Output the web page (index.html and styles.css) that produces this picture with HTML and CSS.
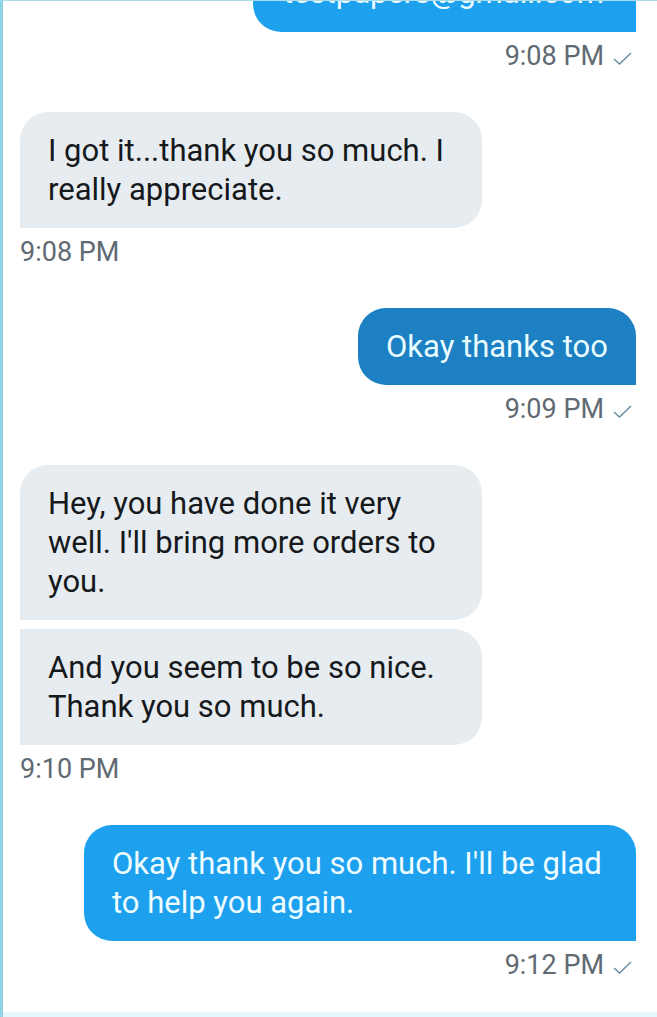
FILE: index.html
```html
<!DOCTYPE html>
<html>
<head>
<meta charset="utf-8">
<link rel="stylesheet" href="styles.css">
</head>
<body>
<div class="screen">
  <div class="chat">
    <div class="group out">
      <div class="bubble blue top-cut">testpapers@gmail.com</div>
      <div class="time">9:08 PM <svg class="check" viewBox="0 0 19 13" width="19" height="13"><path d="M1 7 L6.5 12 L18 1" fill="none" stroke="#6a8da3" stroke-width="1.5"/></svg></div>
    </div>

    <div class="group in">
      <div class="bubble gray first">I got it...thank you so much. I really appreciate.</div>
      <div class="time">9:08 PM</div>
    </div>

    <div class="group out">
      <div class="bubble dark">Okay thanks too</div>
      <div class="time">9:09 PM <svg class="check" viewBox="0 0 19 13" width="19" height="13"><path d="M1 7 L6.5 12 L18 1" fill="none" stroke="#6a8da3" stroke-width="1.5"/></svg></div>
    </div>

    <div class="group in">
      <div class="bubble gray first">Hey, you have done it very well. I'll bring more orders to you.</div>
      <div class="bubble gray mid">And you seem to be so nice. Thank you so much.</div>
      <div class="time">9:10 PM</div>
    </div>

    <div class="group out">
      <div class="bubble blue wide">Okay thank you so much. I'll be glad to help you again.</div>
      <div class="time">9:12 PM <svg class="check" viewBox="0 0 19 13" width="19" height="13"><path d="M1 7 L6.5 12 L18 1" fill="none" stroke="#6a8da3" stroke-width="1.5"/></svg></div>
    </div>
  </div>
  <div class="bottom-band"></div>
</div>
</body>
</html>
```
FILE: styles.css
```css
* { box-sizing: border-box; }
html, body { margin: 0; padding: 0; background: #ffffff; }
body { font-family: Roboto, "Noto Sans", sans-serif; }

.screen {
  width: 657px;
  height: 1017px;
  overflow: hidden;
  border-left: 3px solid #8fd2e4;
  border-top: 1px solid #a9dbe8;
  display: flex;
  flex-direction: column;
}

.chat {
  flex: 1;
  padding: 0 21px 0 17px;
  display: flex;
  flex-direction: column;
  gap: 41px;
}

.group { display: flex; flex-direction: column; }
.group.out { align-items: flex-end; }
.group.in { align-items: flex-start; }

.bubble {
  font-size: 31px;
  line-height: 39px;
  padding: 19px 18px 19px 28px;
  border-radius: 28px;
}

.bubble.gray {
  background: #e6ecf0;
  color: #16191c;
  width: 462px;
}
.group.in .bubble.first { border-radius: 28px 28px 28px 0; }
.group.in .bubble.mid { border-radius: 0 28px 28px 0; margin-top: 9px; }

.bubble.blue {
  background: #1da1ef;
  color: #eefcff;
  border-radius: 28px 28px 0 28px;
}
.bubble.dark {
  background: #1c80c2;
  color: #e9fcff;
  border-radius: 28px 28px 0 28px;
  width: 278px;
}
.bubble.wide { width: 552px; }

.bubble.top-cut {
  width: 383px;
  margin-top: -38px;
  padding: 10px 20px 20px 30px;
  border-radius: 0 0 0 28px;
  white-space: nowrap;
}

.time {
  margin-top: 9px;
  font-size: 27px;
  line-height: 30px;
  color: #5f6a72;
  display: flex;
  align-items: center;
  gap: 9px;
}
.group.out .time { margin-right: 4px; }
.check { margin-top: 4px; }

.bottom-band {
  height: 5px;
  background: #e2f8fc;
  flex: none;
}
```
